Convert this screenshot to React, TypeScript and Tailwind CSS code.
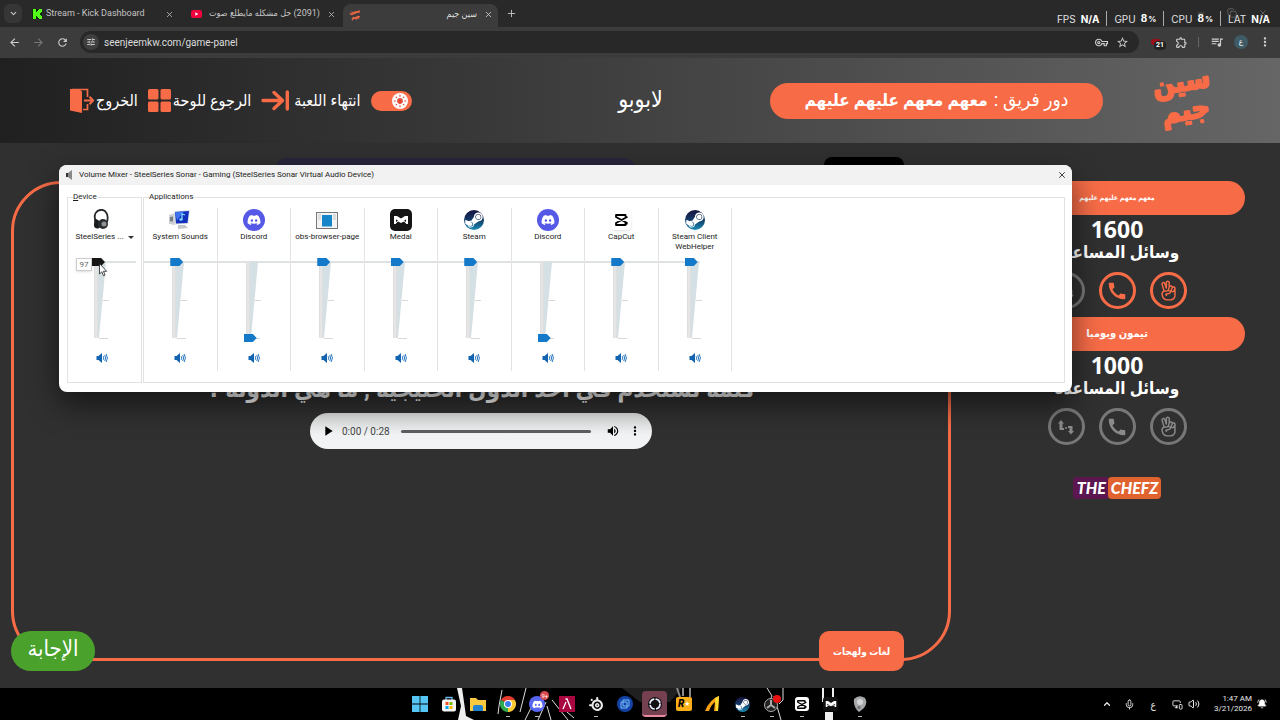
import { useState } from 'react';
import type { ReactNode } from 'react';
import {
  MdArrowBack, MdArrowForward, MdRefresh, MdTune, MdOutlineVpnKey, MdStarBorder, MdOutlineExtension, MdQueueMusic,
  MdMoreVert, MdPlayArrow, MdVolumeUp, MdCall, MdLightMode,
} from 'react-icons/md';
import { FaDiscord, FaSteamSymbol } from 'react-icons/fa';
import { LiaHandPeace } from 'react-icons/lia';
import { SiSteelseries } from 'react-icons/si';
import { ChevronDown, ChevronUp, X, Plus, Mic, Volume2, MonitorSmartphone, Minus, Copy, BellRing } from 'lucide-react';

/* ---------- small drawings ---------- */

function SiteLogo({ className }: { className: string }) {
  return (
    <svg viewBox="0 0 56 66" className={`overflow-visible ${className}`} aria-label="سين جيم">
      <g transform="rotate(-9 28 33)" fill="#f76c47" stroke="#f76c47" strokeWidth="2" strokeLinejoin="round" fontWeight="700" fontSize="28" textAnchor="middle" direction="rtl">
        <text x="29" y="23">سين</text>
        <text x="29" y="52">جيم</text>
      </g>
    </svg>
  );
}

function KickIcon() {
  return (
    <svg viewBox="0 0 10 10" className="w-[10px] h-[10px] shrink-0">
      <rect width="10" height="10" fill="#0b2a06" />
      <path d="M1 0h3v3h1V2h1V1h1V0h3v3H9v1H8v2h1v1h1v3H7V9H6V8H5V7H4v3H1z" fill="#53fc18" />
    </svg>
  );
}

function YoutubeIcon() {
  return (
    <svg viewBox="0 0 11 8" className="w-[11px] h-2 shrink-0">
      <rect width="11" height="8" rx="2" fill="#f0033c" />
      <path d="M4.3 2.2v3.6L7.4 4z" fill="#fff" />
    </svg>
  );
}

function ExitIcon() {
  return (
    <svg viewBox="0 0 24 25" className="w-6 h-[25px]" fill="none" stroke="#f76c47">
      <path d="M2 1.500h15.500V9M17.500 16v5.500H13" strokeWidth="1.700" />
      <path d="M0 1h9l3 2.500V25L0 22.500z" fill="#f76c47" stroke="none" />
      <path d="M14 12.500h9M19.500 8.800l3.700 3.700-3.700 3.700" strokeWidth="2" />
    </svg>
  );
}

function BoardIcon() {
  return (
    <svg viewBox="0 0 23 23" className="w-[23px] h-[23px]" fill="#f76c47">
      <rect width="10.500" height="10.500" rx="1.500" />
      <rect x="12.500" width="10.500" height="10.500" rx="1.500" />
      <rect y="12.500" width="10.500" height="10.500" rx="1.500" />
      <rect x="12.500" y="12.500" width="10.500" height="10.500" rx="1.500" />
    </svg>
  );
}

function EndIcon() {
  return (
    <svg viewBox="0 0 28 21" className="w-7 h-[21px]" fill="none" stroke="#f76c47" strokeWidth="3.400" strokeLinecap="round" strokeLinejoin="round">
      <path d="M2 10.500h19M13 2.500l8.500 8-8.500 8M26.300 2v17" />
    </svg>
  );
}

function SwapIcon() {
  return (
    <svg viewBox="0 0 18 18" className="w-[18px] h-[18px]" fill="currentColor">
      <path d="M1 5.500L4 2l3 3.500H5.500V10H7v2H2.500V5.500zM11 8h4.500v5H17l-3 3.500-3-3.500h1.500v-3H11z" />
      <circle cx="9" cy="10" r="1" />
    </svg>
  );
}

function SpeakerIcon() {
  return (
    <svg viewBox="0 0 12 12" className="w-3 h-3">
      <path d="M0.500 4h2L6 1v10L2.500 8h-2z" fill="#1263b0" />
      <path d="M7.200 4.200q1.200 1.800 0 3.600M8.700 3q2 3 0 6M10.200 2q2.400 4 0 8" fill="none" stroke="#2a78c0" strokeWidth="1" />
    </svg>
  );
}

function HeadphonesIcon() {
  return (
    <svg viewBox="0 0 22 22" className="w-[22px] h-[22px]">
      <path d="M5 13C1.500 5 6 .800 10.500.800S18 6 16 13" fill="none" stroke="#26282b" strokeWidth="1.800" />
      <path d="M3.500 10q5 0 5.500 5t-3 4.500-3-4.500z" fill="#1b1c1e" />
      <circle cx="12" cy="15" r="5" fill="#2b2d30" />
      <circle cx="13" cy="15" r="2.500" fill="#8d9295" />
    </svg>
  );
}

function SystemIcon() {
  return (
    <svg viewBox="0 0 22 22" className="w-[22px] h-[22px]">
      <path d="M0 6l6-2v12l-6-1z" fill="#ccd0d4" />
      <path d="M1 8l3-.500v5l-3-.300z" fill="#777e84" />
      <path d="M5 2l16-1-1.500 14-13.500.500z" fill="#dfe3e6" />
      <path d="M6 3l14-1-1.500 12-11.500.500z" fill="#1230bd" />
      <path d="M6 3l9-.600-7 9z" fill="#3d75ee" />
      <path d="M13 10V5l3 1" fill="none" stroke="#86d8ff" strokeWidth="1.300" />
      <ellipse cx="12" cy="10.500" rx="1.700" ry="1.300" fill="#86d8ff" />
      <path d="M9 16h7l3 3-10 1z" fill="#c1c6cb" />
    </svg>
  );
}

function ObsPageIcon() {
  return (
    <svg viewBox="0 0 22 17" className="w-[22px] h-[17px]">
      <rect x=".500" y=".500" width="21" height="16" fill="#f4f4f4" stroke="#777" />
      <path d="M2 3h3M2 5h3M2 7h3M17 3h3M17 5h3M17 7h3" stroke="#bbb" strokeWidth=".800" />
      <rect x="6" y="3" width="10" height="11.500" fill="#1686c8" />
    </svg>
  );
}

function MedalMark({ className }: { className: string }) {
  return (
    <svg viewBox="0 0 16 10" className={className} fill="#fff">
      <path d="M1 1h3l4 2.500L12 1h3v8h-1.500L11 6.500 8 8 5 6.500 2.500 9H1z" />
      <path d="M3 4.500l2 1L3 7zM13 4.500l-2 1L13 7z" fill="#151515" />
    </svg>
  );
}

function CapCutMark({ className }: { className: string }) {
  return (
    <svg viewBox="0 0 14 12" className={className} fill="none" stroke="currentColor" strokeWidth="1.800" strokeLinejoin="round">
      <path d="M13.500 2.800L2 9v2h9.500V9.200L13.500 10M13.500 9.200L2 3V1h9.500v1.800" />
    </svg>
  );
}

function SteamBadge({ className }: { className: string }) {
  return (
    <span className={`rounded-full bg-gradient-to-b from-[#14123f] via-[#123a66] to-[#1a8fb8] flex items-center justify-center text-white ${className}`}>
      <FaSteamSymbol className="w-full h-full" />
    </span>
  );
}

function DiscordBadge() {
  return (
    <span className="w-[22px] h-[22px] rounded-full bg-[#5559e6] flex items-center justify-center text-white">
      <FaDiscord className="w-[14px] h-[14px]" />
    </span>
  );
}

/* ---------- browser ---------- */

function TabStrip() {
  const stats = [['FPS', 'N/A', ''], ['GPU', '8', '%'], ['CPU', '8', '%'], ['LAT', 'N/A', '']];
  return (
    <div className="relative h-[27px] flex items-end bg-[#292929] pl-1 text-[9px] text-[#c4c4c4]">
      <button aria-label="Search tabs" className="w-[18px] h-[19px] mb-1 rounded-md bg-[#363636] flex items-center justify-center shrink-0">
        <ChevronDown className="w-[9px] h-[9px]" strokeWidth={3} />
      </button>
      <div className="flex items-center h-[26px] w-[155px] pl-[10px] pr-[2px] gap-1 border-r border-transparent shrink-0">
        <KickIcon />
        <span className="flex-1 whitespace-nowrap">Stream - Kick Dashboard</span>
        <button aria-label="Close tab"><X className="w-[9px] h-[9px]" /></button>
      </div>
      <div className="flex items-center h-[26px] w-[166px] pl-[14px] pr-[9px] gap-[7px] shrink-0">
        <YoutubeIcon />
        <span dir="rtl" className="flex-1 whitespace-nowrap">(2091) حل مشكله مايطلع صوت</span>
        <button aria-label="Close tab"><X className="w-[9px] h-[9px]" /></button>
      </div>
      <div className="flex items-center h-[23px] w-[155px] pl-[6px] pr-[5px] pb-[2px] gap-[7px] rounded-t-lg bg-[#3c3c3c] text-[#dedede] shrink-0">
        <SiteLogo className="w-3 h-3" />
        <span dir="rtl" className="flex-1">سين جيم</span>
        <button aria-label="Close tab"><X className="w-[9px] h-[9px]" /></button>
      </div>
      <button aria-label="New tab" className="ml-2 mb-2"><Plus className="w-[11px] h-[11px]" /></button>

      <div className="absolute right-3 top-2 flex gap-[21px] text-[#666]">
        <Minus className="w-[10px] h-[10px]" /><Copy className="w-[10px] h-[10px]" /><X className="w-[10px] h-[10px]" />
      </div>
      <div className="relative ml-auto mr-[10px] mb-px flex leading-[14px] text-[#e2e2e2] font-['Inter',sans-serif]">
        {stats.map(([name, value, unit]) => (
          <div key={name} className="flex items-center gap-[5px] px-[7px] border-l border-[#aaa] first:border-l-0 last:pr-0">
            <span className="text-[10px]">{name}</span>
            <span className="text-[10px] font-bold text-white">{value}{unit && <span className="ml-px text-[8px]">{unit}</span>}</span>
          </div>
        ))}
      </div>
    </div>
  );
}

function AddressBar() {
  return (
    <div className="h-[31px] flex items-center bg-[#3c3c3c] pl-2 pr-2 text-[#cfcfcf]">
      <div className="flex gap-[11px] mr-[11px]">
        <button aria-label="Back"><MdArrowBack className="w-[13px] h-[13px]" /></button>
        <button aria-label="Forward" className="text-[#777]"><MdArrowForward className="w-[13px] h-[13px]" /></button>
        <button aria-label="Reload"><MdRefresh className="w-[13px] h-[13px]" /></button>
      </div>
      <div className="flex-1 flex items-center h-[22px] rounded-full bg-[#282828] pl-[3px] pr-[10px] mb-px">
        <span className="w-4 h-4 rounded-full bg-[#3f3f3f] flex items-center justify-center"><MdTune className="w-[10px] h-[10px]" /></span>
        <input aria-label="Address" defaultValue="seenjeemkw.com/game-panel" className="flex-1 bg-transparent outline-none pl-[5px] text-[10px] text-[#dcdcdc]" />
        <MdOutlineVpnKey className="w-[13px] h-[13px] mr-2" />
        <MdStarBorder className="w-[13px] h-[13px]" />
      </div>
      <div className="flex items-center ml-3 mb-px">
        <button aria-label="Ad blocker" className="relative w-[14px] h-3">
          <span className="block w-[10px] h-[6px] rounded-sm bg-[#9b0d16]" />
          <span className="absolute left-[3px] top-[5px] px-[2px] rounded-sm bg-[#222] text-white text-[7px] leading-[9px] font-bold">21</span>
        </button>
        <button aria-label="Extensions" className="ml-[10px]"><MdOutlineExtension className="w-[13px] h-[13px]" /></button>
        <span className="w-px h-[10px] bg-[#666] ml-[10px]" />
        <button aria-label="Media" className="ml-[11px]"><MdQueueMusic className="w-[14px] h-[14px]" /></button>
        <button className="ml-[10px] w-[14px] h-[14px] rounded-full bg-[#3f5b66] text-[8px] leading-[12px] text-white">ع</button>
        <button aria-label="Menu" className="ml-[10px]"><MdMoreVert className="w-[14px] h-[14px]" /></button>
      </div>
    </div>
  );
}

/* ---------- game page ---------- */

function GameHeader() {
  return (
    <header className="h-[85px] grid grid-cols-[1fr_auto_1fr] items-center pl-[70px] pr-[69px] bg-gradient-to-r from-[#202020] to-[#666] text-white">
      <nav className="flex items-center gap-[10px] text-[16px] whitespace-nowrap">
        <a href="#exit" className="flex items-center gap-[2px]"><ExitIcon />الخروج</a>
        <a href="#board" className="flex items-center gap-[2px]"><BoardIcon />الرجوع للوحة</a>
        <a href="#end" className="flex items-center gap-[5px]"><EndIcon />انتهاء اللعبة</a>
        <button role="switch" aria-checked="true" aria-label="المظهر" className="w-[41px] h-5 rounded-full bg-[#f76c47] flex items-center justify-end pr-1">
          <span className="w-4 h-4 rounded-full bg-white flex items-center justify-center text-[#e2493a]"><MdLightMode className="w-[14px] h-[14px]" /></span>
        </button>
      </nav>
      <h1 className="text-[23px]">لابوبو</h1>
      <div className="flex items-center justify-end gap-[52px]">
        <div dir="rtl" className="w-[333px] h-9 rounded-full bg-[#f76c47] flex items-center justify-center gap-[6px] text-[19px] whitespace-nowrap">
          <span>دور فريق :</span><b className="text-[17px]">معهم معهم عليهم عليهم</b>
        </div>
        <SiteLogo className="w-[56px] h-[66px]" />
      </div>
    </header>
  );
}

function TeamCard({ name, score, small, used }: { name: string; score: number; small?: boolean; used: boolean[] }) {
  const helpers = [
    { label: 'تبديل', icon: <SwapIcon /> },
    { label: 'اتصال', icon: <MdCall className="w-[22px] h-[22px]" /> },
    { label: 'جاوب جوابين', icon: <LiaHandPeace className="w-[23px] h-[23px]" /> },
  ];
  return (
    <section className="flex flex-col items-center mb-2">
      <h2 className={`w-full h-[34px] rounded-full bg-[#f76c47] flex items-center justify-center font-bold ${small ? 'text-[7px]' : 'text-[11px]'}`}>{name}</h2>
      <p className="font-['Noto_Sans'] font-bold text-[23px] leading-[28px]">{score}</p>
      <p className="font-bold text-[17px] leading-[18px] mb-[11px] whitespace-nowrap">وسائل المساعدة</p>
      <div className="flex gap-[14px]">
        {helpers.map((h, i) => (
          <button key={h.label} aria-label={h.label}
            className={`w-[37px] h-[37px] rounded-full border-[3px] flex items-center justify-center ${used[i] ? 'border-[#777] text-[#8a8a8a]' : 'border-[#f76c47] text-[#f76c47]'}`}>
            {h.icon}
          </button>
        ))}
      </div>
    </section>
  );
}

function AudioPlayer() {
  return (
    <div className="w-[342px] h-9 rounded-full bg-gradient-to-b from-[#dcdddd] to-[#f1f3f4] to-60% flex items-center pl-[10px] pr-[10px] text-black">
      <button aria-label="Play"><MdPlayArrow className="w-4 h-4" /></button>
      <span className="ml-[6px] text-[10px] text-[#444]">0:00 / 0:28</span>
      <input type="range" aria-label="Seek" defaultValue={0} max={28}
        className="flex-1 min-w-0 mx-[11px] h-[3px] rounded-full bg-[#5c5e60] appearance-none [&::-webkit-slider-thumb]:appearance-none [&::-webkit-slider-thumb]:w-0" />
      <button aria-label="Mute" className="ml-1"><MdVolumeUp className="w-[14px] h-[14px]" /></button>
      <button aria-label="More" className="ml-2"><MdMoreVert className="w-[14px] h-[14px]" /></button>
    </div>
  );
}

function GameBoard() {
  return (
    <main className="flex-1 flex bg-[#303030] pt-[38px] pb-[27px] pl-[11px] pr-[35px] gap-[38px] text-white">
      <div className="relative flex-1 rounded-[50px] border-[3px] border-[#f76c47] flex flex-col items-center pt-[190px]">
        <div className="absolute left-[261px] -top-[26px] w-[361px] h-10 rounded-xl bg-[#29263c]" />
        <div className="absolute right-[44px] -top-[27px] w-20 h-10 rounded-lg bg-black" />
        <p dir="rtl" className="text-[24px] leading-[30px] font-bold whitespace-nowrap mb-[9px]">كلمة تستخدم في أحد الدول الخليجية , ما هي الدولة ؟</p>
        <AudioPlayer />
        <button className="absolute -left-[3px] -bottom-[13px] w-[84px] h-10 rounded-[20px] bg-[#4aa22c] text-[22px] leading-[30px] pb-1">الإجابة</button>
        <span className="absolute right-[44px] -bottom-[13px] w-[85px] h-10 rounded-[10px] bg-[#f76c47] flex items-center justify-center text-[10px] font-bold">لغات ولهجات</span>
      </div>
      <aside className="w-[256px]">
        <TeamCard name="معهم معهم عليهم عليهم" score={1600} small used={[true, false, false]} />
        <TeamCard name="تيمون وبومبا" score={1000} used={[true, true, true]} />
        <div className="mt-8 flex justify-center font-['Lato'] font-black italic text-[16px] leading-[22px]">
          <span className="bg-[#5c1650] pl-1 pr-[2px] rounded-l-sm">THE</span>
          <span className="bg-[#e0622f] px-[3px] rounded-sm">CHEFZ</span>
        </div>
      </aside>
    </main>
  );
}

/* ---------- volume mixer ---------- */

function Channel({ name, icon, level, device, last }: { name: string; icon: ReactNode; level: number; device?: boolean; last?: boolean }) {
  const [volume, setVolume] = useState(level);
  return (
    <div className={`h-[163px] mt-[5px] pt-px flex flex-col items-center ${device ? 'pr-[5px]' : 'border-r border-[#e3e3e3]'}`}>
      <div className="h-[22px] flex items-center">{icon}</div>
      <div className="mt-px mb-px h-5 text-center leading-[10px]">
        {device
          ? <button className="flex items-center gap-1 ml-[5px] whitespace-nowrap">{name}<span className="border-x-[3px] border-x-transparent border-t-[3px] border-t-[#333]" /></button>
          : <span className={last ? 'block w-[54px]' : 'whitespace-nowrap'}>{name}</span>}
      </div>
      <div className="relative w-full mt-[5px] flex justify-center">
        <span className={`absolute top-[3px] h-[2px] bg-[#dfe2e3] ${device ? 'left-1/2 -right-[5px]' : 'left-0'} ${last ? 'right-[31px]' : 'right-0'}`} />
        <div className="relative w-5 h-[84px]">
          <svg viewBox="0 0 20 84" className="w-5 h-[84px]">
            <path d="M2 4h12L7 80H2z" fill="#d5e0e4" />
            <path d="M2 4h4v76H2z" fill="#dedede" />
            <path d="M4 4v76" stroke="#ededed" />
            <path d="M11 42.500h6M7 80.500h9" stroke="#d5d9da" />
          </svg>
          <input type="range" aria-label={`${name} volume`} value={volume} onChange={(e) => setVolume(Number(e.target.value))}
            className={`absolute left-0 top-0 w-[13px] h-[84px] appearance-none bg-transparent [writing-mode:vertical-lr] [direction:rtl] [&::-webkit-slider-thumb]:appearance-none [&::-webkit-slider-thumb]:w-[13px] [&::-webkit-slider-thumb]:h-2 [&::-webkit-slider-thumb]:[clip-path:polygon(0_0,70%_0,100%_50%,70%_100%,0_100%)] ${device ? '[&::-webkit-slider-thumb]:bg-[#161616]' : '[&::-webkit-slider-thumb]:bg-[#1479c9]'}`} />
        </div>
      </div>
      <button aria-label={`Mute ${name}`} className="mt-[10px]"><SpeakerIcon /></button>
    </div>
  );
}

function VolumeMixer() {
  const apps = [
    { name: 'System Sounds', icon: <SystemIcon />, level: 100 },
    { name: 'Discord', icon: <DiscordBadge />, level: 0 },
    { name: 'obs-browser-page', icon: <ObsPageIcon />, level: 100 },
    { name: 'Medal', icon: <span className="w-[22px] h-[22px] rounded-[5px] bg-[#151515] flex items-center justify-center"><MedalMark className="w-4 h-[10px]" /></span>, level: 100 },
    { name: 'Steam', icon: <SteamBadge className="w-5 h-5" />, level: 100 },
    { name: 'Discord', icon: <DiscordBadge />, level: 0 },
    { name: 'CapCut', icon: <span className="w-5 h-5 rounded shadow-sm flex items-center justify-center text-black"><CapCutMark className="w-[14px] h-3" /></span>, level: 100 },
    { name: 'Steam Client WebHelper', icon: <SteamBadge className="w-5 h-5" />, level: 100 },
  ];
  return (
    <div role="dialog" aria-label="Volume Mixer" className="absolute left-[59px] top-[165px] w-[1013px] rounded-lg overflow-hidden bg-white text-[#1c1c1c] text-[8px] shadow-[0_12px_30px_rgba(0,0,0,0.55)]">
      <div className="h-5 flex items-center bg-[#f2f2f2] pl-[7px] pr-[5px]">
        <svg viewBox="0 0 8 10" className="w-2 h-[10px]"><path d="M0 3h2l4-3v10L2 7H0z" fill="#888" /><path d="M0 3h2v4H0z" fill="#333" /></svg>
        <span className="ml-[5px] flex-1">Volume Mixer - SteelSeries Sonar - Gaming (SteelSeries Sonar Virtual Audio Device)</span>
        <button aria-label="Close"><X className="w-[10px] h-[10px]" /></button>
      </div>
      <div className="flex gap-px pt-[6px] pb-[9px] pl-2 pr-[7px]">
        <fieldset className="w-[75px] border border-[#e2e2e2] pb-[11px]">
          <legend className="ml-[5px] leading-[12px]"><u>D</u>evice</legend>
          <Channel device name="SteelSeries ..." icon={<HeadphonesIcon />} level={100} />
        </fieldset>
        <fieldset className="flex-1 border border-[#e2e2e2] pb-[11px]">
          <legend className="ml-[5px] leading-[12px]">Applications</legend>
          <div className="grid grid-cols-8 w-[588px]">
            {apps.map((app, i) => <Channel key={i} {...app} last={i === apps.length - 1} />)}
          </div>
        </fieldset>
      </div>
      <span role="tooltip" className="absolute left-[17px] top-[93px] w-4 h-[13px] bg-white border border-[#ccc] text-center leading-[11px] text-[#666] shadow">97</span>
      <svg viewBox="0 0 9 14" className="absolute left-[40px] top-[98px] w-[9px] h-[14px]">
        <path d="M.500.500v10.500l2.300-2.200 1.700 4 1.600-.700-1.700-3.800h3.300z" fill="#fff" stroke="#222" strokeWidth=".800" />
      </svg>
    </div>
  );
}

/* ---------- taskbar ---------- */

const taskIcons: { name: string; icon: ReactNode; open?: boolean; active?: boolean }[] = [
  { name: 'Start', icon: <svg viewBox="0 0 16 16" className="w-4 h-4" fill="#55c5f5"><path d="M0 0h7.600v7.600H0zM8.400 0H16v7.600H8.400zM0 8.400h7.600V16H0zM8.400 8.400H16V16H8.400z" /></svg> },
  { name: 'Store', icon: (
    <svg viewBox="0 0 16 16" className="w-4 h-4">
      <path d="M5 4V1.500h6V4" fill="none" stroke="#66b6e8" strokeWidth="1.300" /><rect x="1" y="3.500" width="14" height="12" rx="2" fill="#f4f4f4" />
      <path d="M4.500 6h3v3h-3z" fill="#f25022" /><path d="M8.500 6h3v3h-3z" fill="#7fba00" /><path d="M4.500 10h3v3h-3z" fill="#00a4ef" /><path d="M8.500 10h3v3h-3z" fill="#ffb900" />
    </svg>
  ) },
  { name: 'File Explorer', icon: <svg viewBox="0 0 16 16" className="w-4 h-4"><path d="M0 2h6l2 2h8v11H0z" fill="#fbc940" /><path d="M3 15v-4q0-2 2-2h6q2 0 2 2v4z" fill="#2383cf" /></svg> },
  { name: 'Chrome', open: true, icon: (
    <svg viewBox="0 0 16 16" className="w-4 h-4">
      <path d="M8 8L1.070 4A8 8 0 0 1 14.930 4z" fill="#e33b2e" /><path d="M8 8L14.930 4A8 8 0 0 1 8 16z" fill="#fcc934" /><path d="M8 8v8A8 8 0 0 1 1.070 4z" fill="#2da94f" />
      <path d="M8 4h6.900L11 9.500z" fill="#fcc934" /><circle cx="8" cy="8" r="4" fill="#fff" /><circle cx="8" cy="8" r="3" fill="#3b7ded" />
    </svg>
  ) },
  { name: 'Discord', open: true, icon: (
    <span className="relative w-4 h-4 rounded-full bg-[#5865f2] text-white flex items-center justify-center">
      <FaDiscord className="w-[11px] h-[11px]" />
      <span className="absolute -top-[5px] -right-[4px] px-px rounded-full bg-[#d9474f] text-[6px] leading-[9px]">9+</span>
    </span>
  ) },
  { name: 'Lambda', icon: <span className="w-4 h-4 bg-[#a8083f] flex items-center justify-center"><svg viewBox="0 0 10 12" className="w-[10px] h-3" fill="none" stroke="#fff" strokeWidth="1.300"><path d="M1 11l3-7M3.500 1h1.500l4 10" /></svg></span> },
  { name: 'SteelSeries', open: true, icon: <SiSteelseries className="w-[14px] h-[14px]" /> },
  { name: 'Battle.net', icon: <span className="w-4 h-4 rounded-full bg-[#1243a5] flex items-center justify-center"><svg viewBox="0 0 10 10" className="w-[10px] h-[10px]" fill="none" stroke="#76bdfb"><path d="M1 3h6v6H1zM3 1h6v6H3z" /></svg></span> },
  { name: 'Capture', active: true, icon: <svg viewBox="0 0 14 14" className="w-[14px] h-[14px]"><circle cx="7" cy="7" r="7" fill="#111" /><circle cx="7" cy="7" r="5" fill="none" stroke="#eef" strokeWidth="1.700" strokeDasharray="6.500 1.350" /></svg> },
  { name: 'Rockstar', icon: (
    <span className="relative w-4 h-[14px] rounded-[2px] bg-[#fcaf17] flex items-center justify-center text-black text-[10px] font-black italic leading-[12px]">
      R<span className="text-[7px] text-white">★</span>
    </span>
  ) },
  { name: 'FL', icon: <svg viewBox="0 0 16 16" className="w-4 h-4"><path d="M0 15Q5 3 14 0l-1 15h-4l1-9q-4 3-6 9z" fill="#fca210" /><path d="M10 2l4-2-1 15h-2z" fill="#fddb35" /></svg> },
  { name: 'Steam', open: true, icon: <SteamBadge className="w-[15px] h-[15px]" /> },
  { name: 'OBS', open: true, icon: (
    <svg viewBox="0 0 18 18" className="w-[18px] h-[18px]">
      <circle cx="8" cy="10" r="6.500" fill="#222" stroke="#aaa" /><path d="M8 10V5M8 10l4 3M8 10l-4 3" stroke="#aaa" strokeWidth="2" /><circle cx="14" cy="4" r="4" fill="#ea1111" />
    </svg>
  ) },
  { name: 'CapCut', open: true, icon: <span className="w-[14px] h-[14px] rounded-[3px] bg-white text-black flex items-center justify-center"><CapCutMark className="w-[11px] h-[9px]" /></span> },
  { name: 'Medal', icon: <span className="w-[15px] h-[14px] rounded-[3px] bg-[#111] flex items-center justify-center"><MedalMark className="w-3 h-2" /></span> },
  { name: 'Volume Mixer', open: true, icon: <svg viewBox="0 0 14 16" className="w-[14px] h-4"><path d="M1 3q5-5 11-1 3 5-1 10l-5 4Q0 11 1 3z" fill="#a5a9aa" /><circle cx="7" cy="6" r="3" fill="#d4d6d6" /><circle cx="6" cy="11.500" r="1.700" fill="#777" /></svg> },
];

function Taskbar() {
  return (
    <footer className="relative h-8 bg-black text-[#e8e8e8] flex items-center justify-between">
      <svg viewBox="0 0 480 32" className="absolute left-1/2 -translate-x-1/2 top-0 w-[480px] h-8">
        <path d="M57 0h5l4 28 8 4H58l3-14z" fill="#eee" />
        <path d="M102 2l-3 16-1 8M126 0l-6 24M146 14l-8 18M152 12l16 20M147 18l4 14M160 18l14 12M131 20l-6 12" fill="none" stroke="#ddd" strokeWidth="1" />
        <path d="M222 0h60l-12 14h-30z" fill="#202020" />
        <path d="M277 0l3 9M283 0v8M290 0v9" stroke="#888" strokeWidth="2" />
        <path d="M367 0l5 8-3 6M374 8l7 24M383 0v12l-4 4" stroke="#ddd" strokeWidth="1" fill="none" />
        <path d="M422 0h2v14h-2zM432 0h2v14h-2zM425 24h8v8h-8z" fill="#eee" />
      </svg>
      <div className="w-[280px]" />
      <div className="relative grid grid-cols-16 w-[470px]">
        {taskIcons.map((t) => (
          <button key={t.name} aria-label={t.name} className="relative h-8 flex items-center justify-center">
            {t.active && <span className="absolute inset-x-[2px] top-[3px] bottom-[3px] rounded bg-[#75404f] border-b-2 border-[#e98ba0]" />}
            <span className="relative">{t.icon}</span>
            {t.open && <span className="absolute bottom-[3px] w-1 h-px bg-[#bbb]" />}
          </button>
        ))}
      </div>
      <div className="w-[280px] flex items-center justify-end pr-[13px] whitespace-nowrap">
        <button aria-label="Hidden icons"><ChevronUp className="w-[10px] h-[10px]" strokeWidth={3} /></button>
        <Mic className="w-[11px] h-[11px] ml-3" />
        <span className="ml-4 text-[10px]">ع</span>
        <MonitorSmartphone className="w-[11px] h-[11px] ml-4" />
        <Volume2 className="w-3 h-3 ml-[5px]" />
        <div className="ml-[14px] text-[8px] leading-[10px] text-right">
          <div>1:47 AM</div>
          <div>3/21/2026</div>
        </div>
        <BellRing className="w-[10px] h-[10px] ml-[5px] fill-white" />
      </div>
    </footer>
  );
}

export default function App() {
  return (
    <div className="relative min-h-screen flex flex-col overflow-hidden bg-black font-['Roboto','DejaVu_Sans_Condensed','DejaVu_Sans',sans-serif]">
      <TabStrip />
      <AddressBar />
      <GameHeader />
      <GameBoard />
      <Taskbar />
      <VolumeMixer />
    </div>
  );
}
